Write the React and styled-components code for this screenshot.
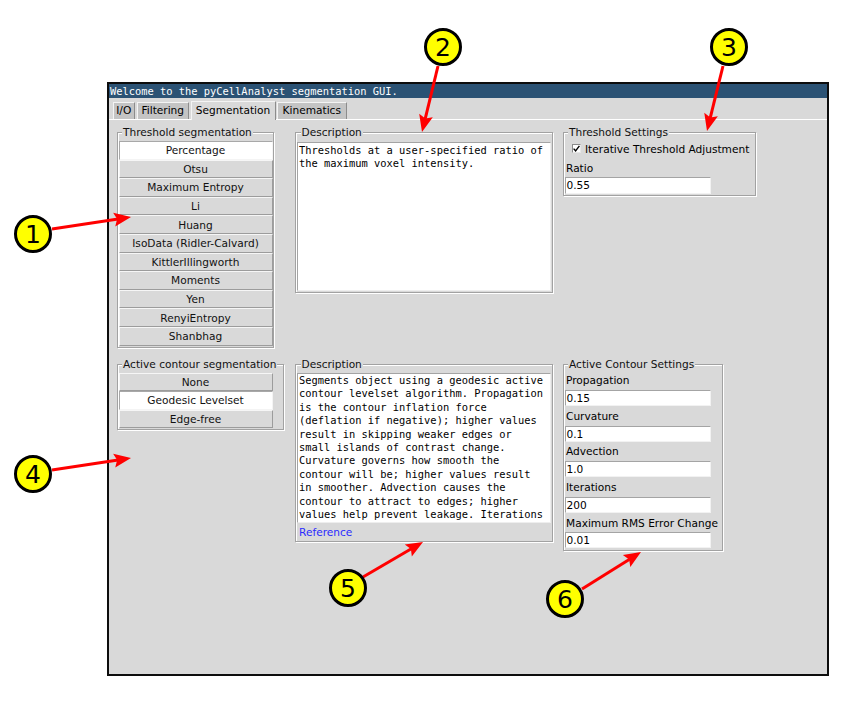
import React from "react";
import styled, { createGlobalStyle } from "styled-components";

const GlobalStyle = createGlobalStyle`
  html, body {
    margin: 0;
    padding: 0;
    background: #ffffff;
  }
  body {
    width: 843px;
    height: 704px;
    overflow: hidden;
    font-family: "DejaVu Sans", "Liberation Sans", sans-serif;
    color: #000;
  }
`;

const Page = styled.div`
  position: relative;
  width: 843px;
  height: 704px;
  box-sizing: border-box;
  padding: 82px 0 0 107px;
`;

const Window = styled.div`
  width: 722px;
  height: 594px;
  box-sizing: border-box;
  border: 2px solid #0d0d0d;
  background: #d9d9d9;
  display: flex;
  flex-direction: column;
`;

const TitleBar = styled.div`
  height: 14px;
  flex: none;
  background: #2b5274;
  color: #ffffff;
  font: 10.4px/14px "DejaVu Sans Mono", "Liberation Mono", monospace;
  padding-left: 1px;
  white-space: pre;
`;

const TabBar = styled.div`
  height: 21px;
  flex: none;
  display: flex;
  align-items: flex-end;
  gap: 1.5px;
  padding-left: 3.5px;
  position: relative;
  z-index: 1;
`;

const Tab = styled.div`
  width: ${(p) => p.$w}px;
  height: ${(p) => (p.$active ? 19 : 17)}px;
  margin-bottom: ${(p) => (p.$active ? -1 : 0)}px;
  box-sizing: border-box;
  background: ${(p) => (p.$active ? "#d9d9d9" : "#c4c4c4")};
  border-left: 1px solid #f4f4f4;
  border-top: 1px solid #f4f4f4;
  border-right: 1px solid #8c8c8c;
  display: flex;
  align-items: center;
  justify-content: center;
  padding-bottom: ${(p) => (p.$active ? 3 : 2)}px;
  font-size: 10.6px;
  white-space: nowrap;
`;

const Pane = styled.div`
  flex: 1;
  border-top: 1px solid #ffffff;
  padding: 6px 0 0 7.5px;
  display: grid;
  grid-template-columns: 168px 258px 200px;
  column-gap: 10px;
  row-gap: 10px;
  align-items: start;
  align-content: start;
`;

const Group = styled.fieldset`
  margin: 0;
  min-width: 0;
  width: ${(p) => p.$w}px;
  box-sizing: border-box;
  padding: ${(p) => p.$pad || "2px 1px 1px 1px"};
  border: 1px solid #a2a2a2;
  box-shadow: inset 1px 1px 0 #ffffff, 1px 1px 0 #ffffff;
  display: flex;
  flex-direction: column;
`;

const Legend = styled.legend`
  padding: 0 1px;
  margin-left: 3.5px;
  font-size: 10.6px;
  line-height: 13px;
  background: #d9d9d9;
  color: #111;
  white-space: nowrap;
`;

const ChoiceButton = styled.div`
  width: 154px;
  height: 18.6px;
  flex: none;
  box-sizing: border-box;
  background: ${(p) => (p.$active ? "#ffffff" : "#d9d9d9")};
  border: 1px solid;
  border-color: ${(p) =>
    p.$active
      ? "#a8a8a8 #f4f4f4 #f4f4f4 #a8a8a8"
      : "#f6f6f6 #9c9c9c #9c9c9c #f6f6f6"};
  display: flex;
  align-items: center;
  justify-content: center;
  font-size: 10.6px;
  white-space: nowrap;
  color: #111;
`;

const TextBox = styled.div`
  width: 253.5px;
  height: ${(p) => p.$h}px;
  flex: none;
  box-sizing: border-box;
  background: #ffffff;
  border: 1px solid;
  border-color: #a4a4a4 #eeeeee #eeeeee #a4a4a4;
  padding: 0.5px 1px;
  font: 10.4px/13.4px "DejaVu Sans Mono", "Liberation Mono", monospace;
  white-space: pre;
  overflow: hidden;
  color: #000;
`;

const LinkRow = styled.div`
  height: 18.5px;
  display: flex;
  align-items: center;
  padding-left: 2px;
  font-size: 10.6px;
  color: #2b2bff;
`;

const CheckRow = styled.div`
  height: 19px;
  display: flex;
  align-items: center;
  gap: 4.5px;
  padding-left: 7px;
  font-size: 10.6px;
  white-space: nowrap;
`;

const CheckBox = styled.span`
  width: 9px;
  height: 9px;
  box-sizing: border-box;
  background: #ffffff;
  border: 1px solid;
  border-color: #8a8a8a #e8e8e8 #e8e8e8 #8a8a8a;
  display: flex;
  align-items: center;
  justify-content: center;
`;

const FieldLabel = styled.div`
  height: 19.4px;
  display: flex;
  align-items: center;
  padding: 0 0 0 1.5px;
  font-size: 10.6px;
  white-space: nowrap;
`;

const Entry = styled.div`
  width: 146.7px;
  height: 16.2px;
  box-sizing: border-box;
  background: #ffffff;
  border: 1px solid;
  border-color: #a4a4a4 #f2f2f2 #f2f2f2 #a4a4a4;
  display: flex;
  align-items: center;
  padding-left: 1px;
  font-size: 10.6px;
  color: #000;
`;

const Overlay = styled.svg`
  position: absolute;
  left: 0;
  top: 0;
  width: 843px;
  height: 704px;
  pointer-events: none;
  overflow: visible;
`;

const thresholdMethods = [
  "Percentage",
  "Otsu",
  "Maximum Entropy",
  "Li",
  "Huang",
  "IsoData (Ridler-Calvard)",
  "KittlerIllingworth",
  "Moments",
  "Yen",
  "RenyiEntropy",
  "Shanbhag",
];

const contourMethods = ["None", "Geodesic Levelset", "Edge-free"];

const contourFields = [
  ["Propagation", "0.15"],
  ["Curvature", "0.1"],
  ["Advection", "1.0"],
  ["Iterations", "200"],
  ["Maximum RMS Error Change", "0.01"],
];

const thresholdText = `Thresholds at a user-specified ratio of
the maximum voxel intensity.`;

const contourText = `Segments object using a geodesic active
contour levelset algorithm. Propagation
is the contour inflation force
(deflation if negative); higher values
result in skipping weaker edges or
small islands of contrast change.
Curvature governs how smooth the
contour will be; higher values result
in smoother. Advection causes the
contour to attract to edges; higher
values help prevent leakage. Iterations`;

const callouts = [
  { n: 1, cx: 33, cy: 234, from: [52, 229], to: [131, 217] },
  { n: 2, cx: 443, cy: 47, from: [438, 66], to: [422, 132] },
  { n: 3, cx: 729, cy: 47, from: [723, 66], to: [707, 131] },
  { n: 4, cx: 33, cy: 474, from: [52, 470], to: [131, 458] },
  { n: 5, cx: 348, cy: 588, from: [363, 577], to: [423, 542] },
  { n: 6, cx: 565, cy: 599, from: [582, 589], to: [641, 552] },
];

function Arrow({ from, to }) {
  const [x1, y1] = from;
  const [x2, y2] = to;
  const dx = x2 - x1;
  const dy = y2 - y1;
  const len = Math.hypot(dx, dy);
  const ux = dx / len;
  const uy = dy / len;
  const head = 17;
  const half = 7;
  const bx = x2 - ux * head;
  const by = y2 - uy * head;
  const pts = [
    [x2, y2],
    [bx - uy * half, by + ux * half],
    [bx + ux * 3, by + uy * 3],
    [bx + uy * half, by - ux * half],
  ]
    .map((p) => p.join(","))
    .join(" ");
  return (
    <g>
      <line
        x1={x1}
        y1={y1}
        x2={bx + ux * 4}
        y2={by + uy * 4}
        stroke="#ff0000"
        strokeWidth="3"
      />
      <polygon points={pts} fill="#ff0000" />
    </g>
  );
}

function Callouts() {
  return (
    <Overlay viewBox="0 0 843 704">
      {callouts.map((c) => (
        <g key={c.n}>
          <Arrow from={c.from} to={c.to} />
          <circle
            cx={c.cx}
            cy={c.cy}
            r="17.5"
            fill="#ffff00"
            stroke="#000"
            strokeWidth="3"
          />
          <text
            x={c.cx}
            y={c.cy + 9}
            textAnchor="middle"
            fontFamily="DejaVu Sans, sans-serif"
            fontSize="25"
            fill="#000"
          >
            {c.n}
          </text>
        </g>
      ))}
    </Overlay>
  );
}

export default function App() {
  return (
    <>
      <GlobalStyle />
      <Page>
        <Window>
          <TitleBar>Welcome to the pyCellAnalyst segmentation GUI.</TitleBar>
          <TabBar>
            <Tab $w={22.5}>I/O</Tab>
            <Tab $w={52.5}>Filtering</Tab>
            <Tab $w={85} $active>
              Segmentation
            </Tab>
            <Tab $w={69.5}>Kinematics</Tab>
          </TabBar>
          <Pane>
            <Group $w={157}>
              <Legend>Threshold segmentation</Legend>
              {thresholdMethods.map((m, i) => (
                <ChoiceButton key={m} $active={i === 0}>
                  {m}
                </ChoiceButton>
              ))}
            </Group>

            <Group $w={258} $pad="3px 1px 1px 1.5px">
              <Legend>Description</Legend>
              <TextBox $h={149.3}>{thresholdText}</TextBox>
            </Group>

            <Group $w={193} $pad="0 2px 1.5px 1px">
              <Legend>Threshold Settings</Legend>
              <CheckRow>
                <CheckBox>
                  <svg width="7" height="7" viewBox="0 0 7 7">
                    <path
                      d="M0.6 3.6 L2.6 5.8 L6.4 0.8"
                      fill="none"
                      stroke="#000"
                      strokeWidth="1.4"
                    />
                  </svg>
                </CheckBox>
                Iterative Threshold Adjustment
              </CheckRow>
              <FieldLabel>Ratio</FieldLabel>
              <Entry>0.55</Entry>
            </Group>

            <Group $w={167}>
              <Legend>Active contour segmentation</Legend>
              {contourMethods.map((m, i) => (
                <ChoiceButton key={m} $active={i === 1}>
                  {m}
                </ChoiceButton>
              ))}
            </Group>

            <Group $w={258} $pad="2px 1px 0 1.5px">
              <Legend>Description</Legend>
              <TextBox $h={150}>{contourText}</TextBox>
              <LinkRow>Reference</LinkRow>
            </Group>

            <Group $w={160.5} $pad="0 2px 1.5px 1px">
              <Legend>Active Contour Settings</Legend>
              {contourFields.map(([label, value]) => (
                <React.Fragment key={label}>
                  <FieldLabel>{label}</FieldLabel>
                  <Entry>{value}</Entry>
                </React.Fragment>
              ))}
            </Group>
          </Pane>
        </Window>
        <Callouts />
      </Page>
    </>
  );
}
